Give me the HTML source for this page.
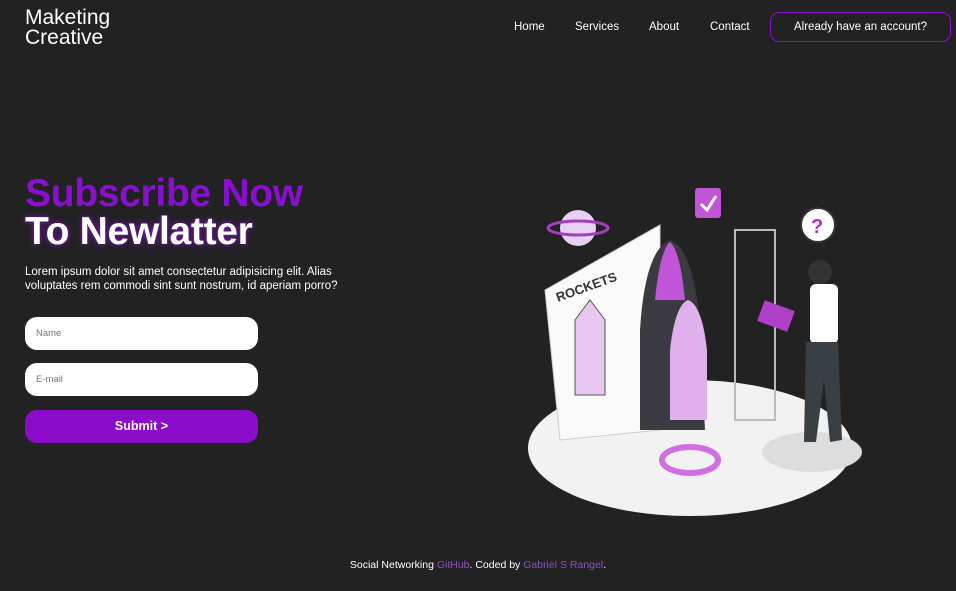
<!DOCTYPE html>
<html><head><style>
body{margin:0;width:956px;height:591px;background:#222;font-family:"Liberation Sans",sans-serif;color:#fff;position:relative;overflow:hidden}
.logo{position:absolute;left:25px;top:8px;font-size:21px;line-height:20px}
.nav{position:absolute;top:21px;font-size:11.5px}
.acct{position:absolute;left:770px;top:12px;width:181px;height:30px;border:1.5px solid #8a10d0;border-radius:9px;box-sizing:border-box;font-size:11.5px;text-align:center;line-height:28px}
h1{position:absolute;left:25px;margin:0;font-size:39px;font-weight:bold;letter-spacing:-0.3px}
.p{position:absolute;left:25px;top:265px;font-size:11.5px;line-height:14px;width:340px}
.in{position:absolute;left:25px;width:233px;height:33px;background:#fff;border-radius:12px;color:#777;font-size:9.5px;line-height:33px;padding-left:11px;box-sizing:border-box}
.btn{position:absolute;left:25px;top:410px;width:233px;height:33px;background:#8a0cc8;border-radius:12px;font-size:12.5px;font-weight:bold;text-align:center;line-height:33px}
.foot{position:absolute;top:559px;left:0;width:956px;text-align:center;font-size:10.5px}
.foot span{color:#8a4fc0}
</style></head><body>
<div class="logo">Maketing<br>Creative</div>
<div class="nav" style="left:514px">Home</div>
<div class="nav" style="left:575px">Services</div>
<div class="nav" style="left:649px">About</div>
<div class="nav" style="left:710px">Contact</div>
<div class="acct">Already have an account?</div>
<h1 style="top:172px;color:#8a10d0">Subscribe Now</h1>
<h1 style="top:210px;color:#fff;text-shadow:0 0 6px #8a10d0">To Newlatter</h1>
<div class="p">Lorem ipsum dolor sit amet consectetur adipisicing elit. Alias voluptates rem commodi sint sunt nostrum, id aperiam porro?</div>
<div class="in" style="top:317px">Name</div>
<div class="in" style="top:363px">E-mail</div>
<div class="btn">Submit &gt;</div>
<svg style="position:absolute;left:520px;top:180px" width="350" height="340">
<ellipse cx="170" cy="268" rx="162" ry="68" fill="#f2f2f2"/>
<ellipse cx="292" cy="272" rx="50" ry="20" fill="#ddd"/>
<polygon points="25,110 140,45 140,250 40,260" fill="#fafafa" stroke="#ccc"/>
<text x="38" y="122" font-size="13" font-weight="bold" fill="#333" transform="rotate(-20 38 122)" font-family="Liberation Sans">ROCKETS</text>
<path d="M55,140 L70,120 L85,140 L85,215 L55,215Z" fill="#e8c8f0" stroke="#555"/>
<rect x="215" y="50" width="40" height="190" fill="none" stroke="#bbb" stroke-width="2"/>
<path d="M120,150 Q125,70 150,60 Q175,70 180,150 L185,250 L120,250Z" fill="#3a3a40"/>
<path d="M135,120 Q140,70 150,62 Q160,70 165,120Z" fill="#c055d8"/>
<path d="M150,170 Q155,125 168,120 Q182,125 187,170 L187,240 L150,240Z" fill="#e0b0ec"/>
<ellipse cx="170" cy="280" rx="28" ry="13" fill="none" stroke="#d070e0" stroke-width="6"/>
<ellipse cx="58" cy="48" rx="18" ry="18" fill="#e8d0f4"/>
<ellipse cx="58" cy="48" rx="30" ry="7" fill="none" stroke="#a040c0" stroke-width="3"/>
<rect x="175" y="8" width="26" height="30" rx="3" fill="#c055d8"/>
<path d="M181,24 L187,30 L196,16" stroke="#fff" stroke-width="3" fill="none"/>
<circle cx="298" cy="45" r="17" fill="#fff" stroke="#333" stroke-width="2"/>
<text x="291" y="53" font-size="20" font-weight="bold" fill="#b030c8" font-family="Liberation Sans">?</text>
<circle cx="300" cy="92" r="12" fill="#333"/>
<rect x="290" y="104" width="28" height="60" rx="6" fill="#fff"/>
<path d="M286,162 L318,162 L322,260 L310,262 L304,200 L296,262 L284,262Z" fill="#3a3f44"/>
<rect x="240" y="125" width="32" height="22" fill="#b040c8" transform="rotate(20 256 136)"/>
</svg>
<div class="foot">Social Networking <span>GitHub</span>. Coded by <span>Gabriel S Rangel</span>.</div>
</body></html>
